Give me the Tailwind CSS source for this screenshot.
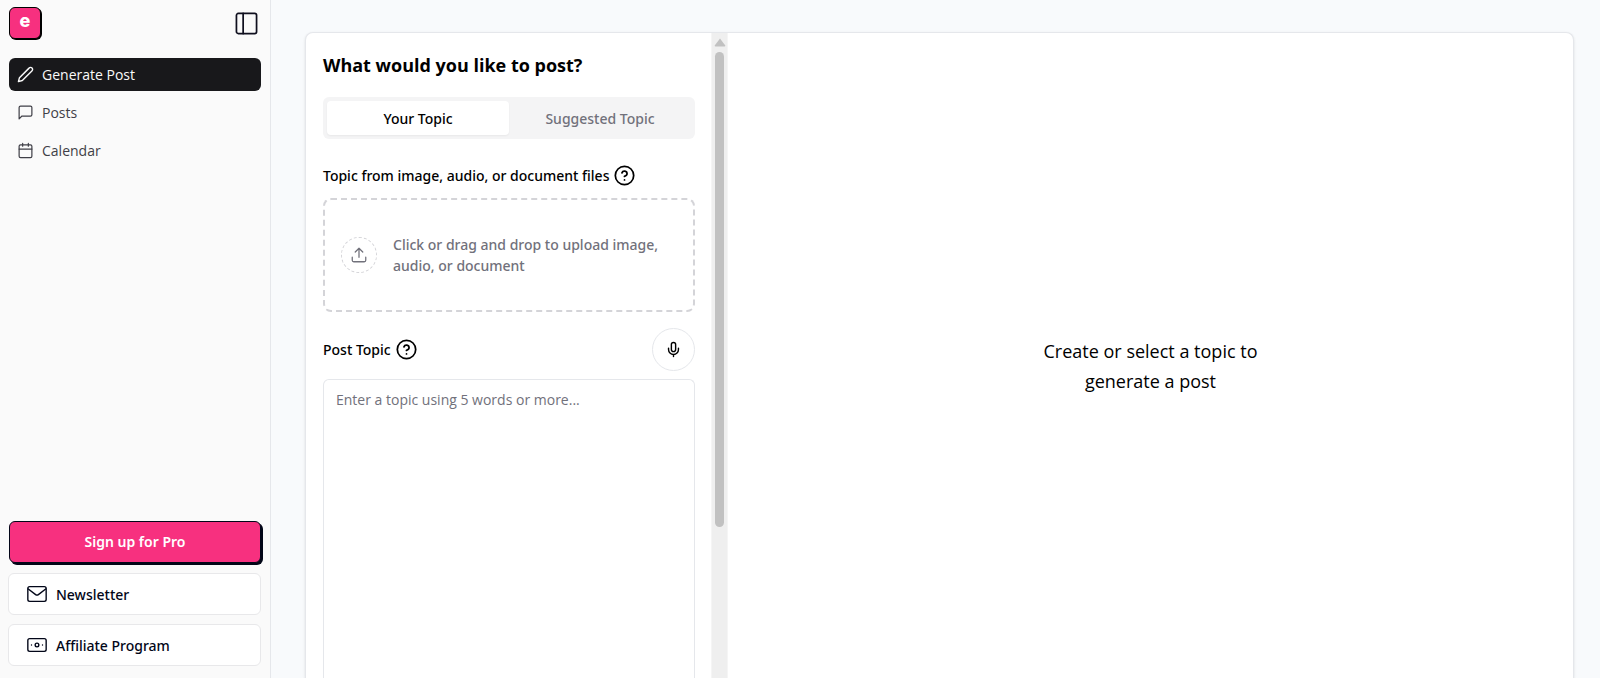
<!DOCTYPE html>
<html lang="en">
<head>
  <meta charset="UTF-8">
  <meta name="viewport" content="width=device-width, initial-scale=1">
  <title>Generate Post</title>
  <script src="https://cdn.jsdelivr.net/npm/@tailwindcss/browser@4"></script>
</head>
<body class="flex h-screen overflow-hidden bg-slate-50 font-['Open_Sans','Noto_Sans',sans-serif] text-sm text-black">

  <!-- Sidebar -->
  <aside class="flex w-[271px] shrink-0 flex-col border-r border-[#e5e7eb] bg-[#fafafa] px-2 pt-[7px] pb-3">
    <div class="flex items-center justify-between pr-1">
      <a href="#" aria-label="Home" class="ml-px flex size-8 items-center justify-center rounded-md border border-black bg-[#f7307f] pb-1 font-['Inter',sans-serif] text-lg leading-none font-extrabold text-white shadow-[1px_1px_0_#000]">e</a>
      <button type="button" aria-label="Toggle sidebar">
        <svg class="size-[23px]" viewBox="0 0 24 24" fill="none" stroke="#0f0f1e" stroke-width="1.800" stroke-linecap="round" stroke-linejoin="round"><rect x="1.500" y="1.500" width="21" height="21" rx="2"/><path d="M8.500 1.500v21"/></svg>
      </button>
    </div>

    <nav class="mt-[19px] mr-px ml-px flex flex-col gap-[5px] text-zinc-700">
      <a href="#" class="flex h-[33px] items-center gap-2 rounded-md bg-zinc-900 px-2 text-zinc-50">
        <svg class="size-[17px]" viewBox="0 0 24 24" fill="none" stroke="currentColor" stroke-width="2" stroke-linecap="round" stroke-linejoin="round"><path d="M17 3a2.850 2.830 0 1 1 4 4L7.500 20.500 2 22l1.500-5.500Z"/></svg>
        <span class="pt-px">Generate Post</span>
      </a>
      <a href="#" class="flex h-[33px] items-center gap-2 rounded-md px-2">
        <svg class="size-[17px]" viewBox="0 0 24 24" fill="none" stroke="currentColor" stroke-width="1.700" stroke-linecap="round" stroke-linejoin="round"><path d="M21 15a2 2 0 0 1-2 2H7l-4 4V5a2 2 0 0 1 2-2h14a2 2 0 0 1 2 2z"/></svg>
        <span class="pt-px">Posts</span>
      </a>
      <a href="#" class="flex h-[33px] items-center gap-2 rounded-md px-2">
        <svg class="size-[17px]" viewBox="0 0 24 24" fill="none" stroke="currentColor" stroke-width="1.700" stroke-linecap="round" stroke-linejoin="round"><path d="M8 2v4M16 2v4"/><rect x="3" y="4" width="18" height="18" rx="2"/><path d="M3 10h18"/></svg>
        <span class="pt-px">Calendar</span>
      </a>
    </nav>

    <div class="mt-auto flex flex-col gap-[9px] text-slate-950">
      <button type="button" class="mr-px mb-px ml-px h-[42px] rounded-md border border-slate-950 bg-[#f7307f] font-['Noto_Sans',sans-serif] font-semibold text-white shadow-[2px_2px_0_#020617]">Sign up for Pro</button>
      <a href="#" class="mr-px flex h-[42px] items-center gap-2 rounded-md border border-[#e8e8ea] bg-white px-[17px] font-['Noto_Sans',sans-serif] font-medium">
        <svg class="size-[22px]" viewBox="0 0 24 24" fill="none" stroke="currentColor" stroke-width="1.500" stroke-linecap="round" stroke-linejoin="round"><rect x="2" y="4" width="20" height="16" rx="2"/><path d="m2.500 6.500 8 6.200a2.500 2.500 0 0 0 3 0l8-6.200"/></svg>
        <span class="pt-px">Newsletter</span>
      </a>
      <a href="#" class="mr-px flex h-[42px] items-center gap-2 rounded-md border border-[#e8e8ea] bg-white px-[17px] font-['Noto_Sans',sans-serif] font-medium">
        <svg class="size-[22px]" viewBox="0 0 24 24" fill="none" stroke="currentColor" stroke-width="1.500" stroke-linecap="round" stroke-linejoin="round"><rect x="2" y="5" width="20" height="14" rx="2"/><circle cx="12" cy="12" r="2"/><path d="M6 12h.01M18 12h.01"/></svg>
        <span class="pt-px">Affiliate Program</span>
      </a>
    </div>
  </aside>

  <!-- Workspace -->
  <main class="flex min-w-0 flex-1 pt-8 pr-[26px] pl-[34px]">
    <div class="flex min-w-0 flex-1 overflow-hidden rounded-t-lg border border-b-0 border-[#e5e7eb] bg-white shadow-sm">

      <section class="flex w-[405px] shrink-0 flex-col overflow-hidden pt-[18px] pr-4 pl-[17px]">
        <h1 class="text-lg leading-7 font-bold">What would you like to post?</h1>

        <div role="tablist" class="mt-[18px] grid h-[42px] shrink-0 grid-cols-2 rounded-md bg-zinc-100 p-1 font-['Noto_Sans',sans-serif] font-medium">
          <button type="button" role="tab" aria-selected="true" class="rounded-sm bg-white pt-px shadow-xs">Your Topic</button>
          <button type="button" role="tab" aria-selected="false" class="rounded-sm pt-px text-zinc-500">Suggested Topic</button>
        </div>

        <div class="mt-[26px] flex h-5 shrink-0 items-center gap-[5px] font-['Noto_Sans',sans-serif] font-medium">
          <label for="files" class="pt-px">Topic from image, audio, or document files</label>
          <svg class="size-[21px]" viewBox="0 0 24 24" fill="none" stroke="currentColor" stroke-width="2" stroke-linecap="round" stroke-linejoin="round"><circle cx="12" cy="12" r="10.500"/><path d="M9.090 9a3 3 0 0 1 5.830 1c0 2-3 3-3 3M12 17h.01"/></svg>
        </div>

        <label for="files" class="mt-[13px] flex h-[114px] shrink-0 cursor-pointer items-center gap-4 rounded-lg border-2 border-dashed border-zinc-300 px-4 font-['Noto_Sans',sans-serif] font-medium text-zinc-500">
          <span class="flex size-9 shrink-0 items-center justify-center rounded-full border border-dashed border-zinc-300">
            <svg class="size-[18px]" viewBox="0 0 24 24" fill="none" stroke="currentColor" stroke-width="1.700" stroke-linecap="round" stroke-linejoin="round"><path d="M21 15v4a2 2 0 0 1-2 2H5a2 2 0 0 1-2-2v-4M17 8l-5-5-5 5M12 3v12"/></svg>
          </span>
          <span class="leading-[21px]">Click or drag and drop to upload image, audio, or document</span>
          <input id="files" type="file" class="sr-only">
        </label>

        <div class="mt-4 flex shrink-0 items-center justify-between">
          <div class="flex items-center gap-[5px] font-['Noto_Sans',sans-serif] font-medium">
            <label for="topic" class="pt-px">Post Topic</label>
            <svg class="size-[21px]" viewBox="0 0 24 24" fill="none" stroke="currentColor" stroke-width="2" stroke-linecap="round" stroke-linejoin="round"><circle cx="12" cy="12" r="10.500"/><path d="M9.090 9a3 3 0 0 1 5.830 1c0 2-3 3-3 3M12 17h.01"/></svg>
          </div>
          <button type="button" aria-label="Record topic" class="flex size-[43px] items-center justify-center rounded-full border border-[#e5e7eb]">
            <svg class="size-[17px]" viewBox="0 0 24 24" fill="none" stroke="currentColor" stroke-width="2" stroke-linecap="round" stroke-linejoin="round"><path d="M12 2a3 3 0 0 0-3 3v7a3 3 0 0 0 6 0V5a3 3 0 0 0-3-3Z"/><path d="M19 10v2a7 7 0 0 1-14 0v-2M12 19v3"/></svg>
          </button>
        </div>

        <textarea id="topic" placeholder="Enter a topic using 5 words or more..." class="mt-2 min-h-0 flex-1 resize-none rounded-t-md border border-b-0 border-[#e5e7eb] px-3 py-[10px] leading-5 placeholder:text-zinc-500"></textarea>
      </section>

      <!-- Scroll track -->
      <div class="flex w-[17px] shrink-0 flex-col items-center border-x border-[#f5f5f5] bg-[#efefef] pt-[5px]">
        <svg class="h-[9px] w-[12px] shrink-0 text-[#c1c1c1]" viewBox="0 0 12 9" fill="currentColor"><path d="M6 0.500 11.300 7.500Q11.300 8.500 10.500 8.500H1.500Q0.700 8.500 0.700 7.500Z"/></svg>
        <div class="mt-[5px] h-[76%] max-h-[475px] w-[9px] rounded-full bg-[#c1c1c1]"></div>
      </div>

      <section class="flex min-w-0 flex-1 items-center justify-center pt-5">
        <p class="w-[252px] text-center text-lg leading-[30px]">Create or select a topic to generate a post</p>
      </section>
    </div>
  </main>

</body>
</html>
